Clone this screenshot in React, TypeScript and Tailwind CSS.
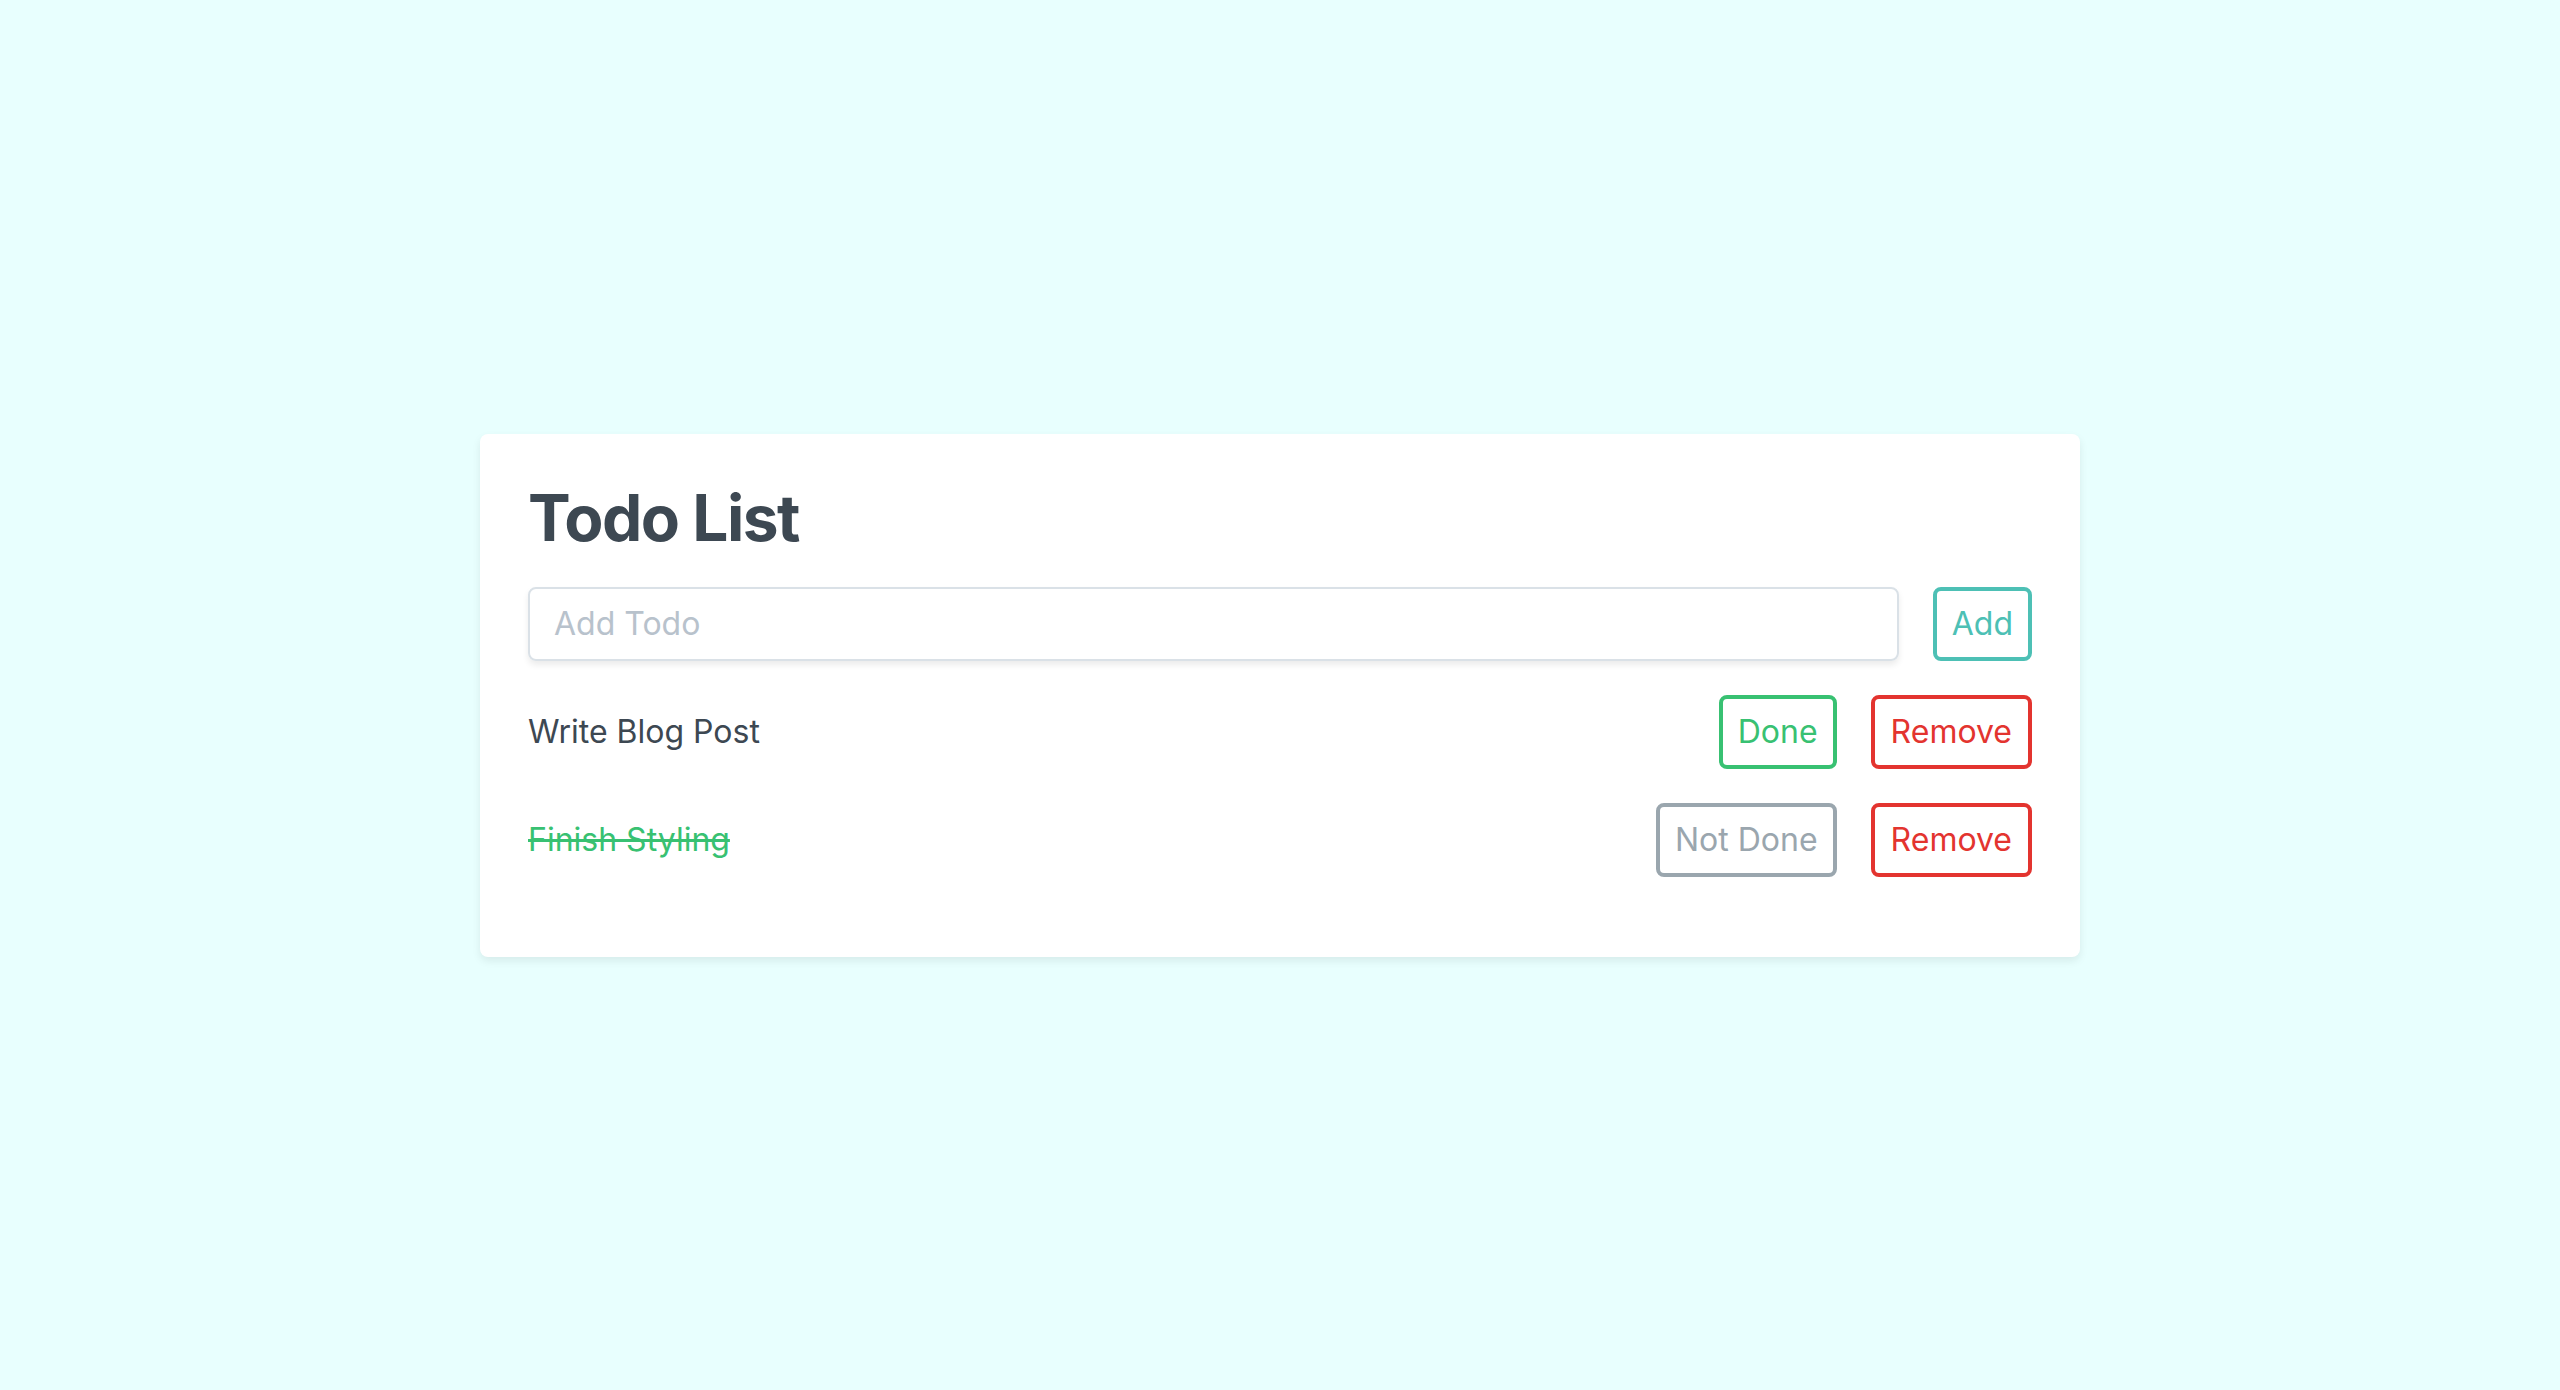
import { useState } from "react"

interface Todo {
  id: number
  text: string
  done: boolean
}

export default function App() {
  const [todos, setTodos] = useState<Todo[]>([
    { id: 1, text: "Write Blog Post", done: false },
    { id: 2, text: "Finish Styling", done: true },
  ])
  const [value, setValue] = useState("")

  const addTodo = () => {
    if (!value.trim()) return
    setTodos([...todos, { id: Date.now(), text: value, done: false }])
    setValue("")
  }

  const toggle = (id: number) => {
    setTodos(todos.map((t) => (t.id === id ? { ...t, done: !t.done } : t)))
  }

  const remove = (id: number) => {
    setTodos(todos.filter((t) => t.id !== id))
  }

  return (
    <div className="min-h-screen w-full bg-[#e8fffe] flex items-center justify-center font-['Inter',sans-serif]">
      <div className="w-[1600px] bg-white rounded-[8px] shadow-[0_4px_8px_0_rgba(0,0,0,0.08)] pt-[48px] px-[48px] pb-[46px]">
        <h1 className="text-[64px] leading-[72px] font-bold text-[#3d4852] tracking-[-1.5px] mb-[33px]">Todo List</h1>

        {/* 입력 영역 */}
        <div className="flex mb-[34px]">
          <input
            value={value}
            onChange={(e) => setValue(e.target.value)}
            placeholder="Add Todo"
            className="flex-1 h-[74px] border-2 border-[#dae1e7] rounded-[8px] shadow-[0_4px_6px_0_rgba(0,0,0,0.08)] px-[24px] text-[32px] text-[#606f7b] placeholder:text-[#b8c2cc] outline-none"
          />
          <button
            onClick={addTodo}
            className="ml-[34px] h-[74px] px-[15px] border-4 border-[#4dc0b5] rounded-[8px] text-[32px] text-[#4dc0b5]"
          >
            Add
          </button>
        </div>

        {todos.map((todo) => (
          <div key={todo.id} className="flex items-center mb-[34px]">
            <p
              className={`flex-1 text-[32px] ${
                todo.done ? "line-through text-[#38c172]" : "text-[#3d4852]"
              }`}
            >
              {todo.text}
            </p>
            {todo.done ? (
              <button
                onClick={() => toggle(todo.id)}
                className="ml-[34px] h-[74px] px-[15px] border-4 border-[#9aa6ae] rounded-[8px] text-[32px] text-[#9aa6ae]"
              >
                Not Done
              </button>
            ) : (
              <button
                onClick={() => toggle(todo.id)}
                className="ml-[34px] h-[74px] px-[15px] border-4 border-[#38c172] rounded-[8px] text-[32px] text-[#38c172]"
              >
                Done
              </button>
            )}
            <button
              onClick={() => remove(todo.id)}
              className="ml-[34px] h-[74px] px-[16px] border-4 border-[#e3342f] rounded-[8px] text-[32px] text-[#e3342f]"
            >
              Remove
            </button>
          </div>
        ))}
      </div>
    </div>
  )
}
